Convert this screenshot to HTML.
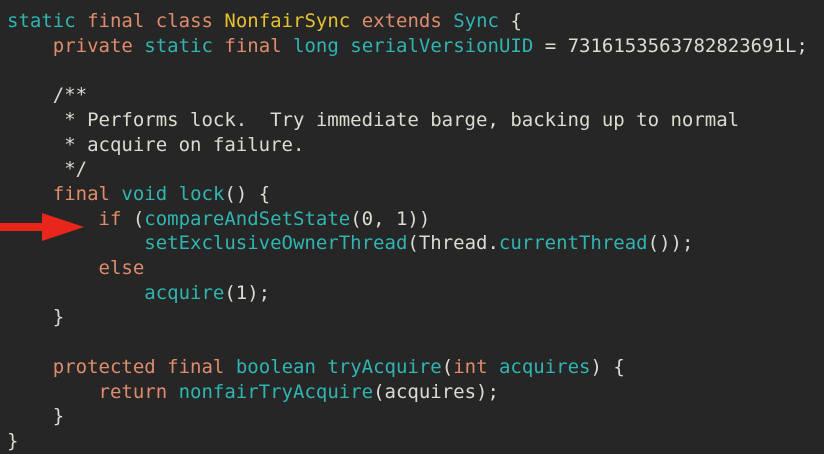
<!DOCTYPE html><html><head><style>
html,body{margin:0;padding:0;width:824px;height:454px;background:#262626;overflow:hidden}
pre{position:absolute;left:7px;top:9px;margin:0;font-family:"DejaVu Sans Mono",monospace;font-size:19px;line-height:24.7px;color:#dcdcd0}
.c{color:#2fb5b2}.k{color:#e08c6c}.y{color:#e6c230}
</style></head><body>
<pre><span class="c">static</span> <span class="k">final</span> <span class="k">class</span> <span class="y">NonfairSync</span> <span class="k">extends</span> <span class="c">Sync</span> {
    <span class="k">private</span> <span class="c">static</span> <span class="k">final</span> <span class="c">long</span> <span class="c">serialVersionUID</span> = 7316153563782823691L;

    /**
     * Performs lock.  Try immediate barge, backing up to normal
     * acquire on failure.
     */
    <span class="k">final</span> <span class="c">void</span> <span class="c">lock</span>() {
        <span class="k">if</span> (<span class="c">compareAndSetState</span>(0, 1))
            <span class="c">setExclusiveOwnerThread</span>(Thread.<span class="c">currentThread</span>());
        <span class="k">else</span>
            <span class="c">acquire</span>(1);
    }

    <span class="k">protected</span> <span class="k">final</span> <span class="c">boolean</span> <span class="c">tryAcquire</span>(<span class="k">int</span> <span class="c">acquires</span>) {
        <span class="k">return</span> <span class="c">nonfairTryAcquire</span>(acquires);
    }
}</pre>
<svg style="position:absolute;left:0;top:209px" width="90" height="36"><polygon points="0,14 42,14 42,4 84,18 42,32 42,22 0,22" fill="#e8261c"/></svg>
</body></html>
